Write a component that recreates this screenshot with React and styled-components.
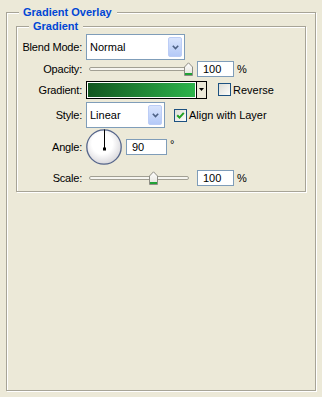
import styled, { createGlobalStyle } from "styled-components";

const GlobalStyle = createGlobalStyle`
  html, body {
    margin: 0;
    padding: 0;
    background: #ece9d8;
  }
  body {
    font-family: "Liberation Sans", Arial, sans-serif;
    font-size: 11px;
    color: #000;
  }
`;

const Page = styled.div`
  box-sizing: border-box;
  height: 100vh;
  display: flex;
  flex-direction: column;
  padding: 6px 6px 6px;
`;

const GroupBox = styled.fieldset`
  min-width: 0;
  margin: ${(p) => (p.$inner ? "1px 9px 0" : "0")};
  flex: ${(p) => (p.$inner ? "none" : "1")};
  padding: ${(p) => (p.$inner ? "1px 0 2px" : "0")};
  border: 1px solid #a7a497;
  box-shadow: inset 1px 1px 0 #fff, 1px 1px 0 #fff;
`;

const Legend = styled.legend`
  margin-left: 12px;
  padding: 0 5px 0 4px;
  background: #ece9d8;
  color: #0046d5;
  font-weight: bold;
  line-height: 13px;
`;

const Row = styled.div`
  display: flex;
  align-items: center;
  height: ${(p) => p.$h}px;
`;

const Label = styled.span`
  flex: none;
  width: 65px;
  margin-right: 4px;
  text-align: right;
  letter-spacing: -0.2px;
`;

const Select = styled.div`
  box-sizing: border-box;
  flex: none;
  width: ${(p) => p.$w}px;
  height: 26px;
  border: 1px solid #7f9db9;
  background: #fff;
  display: flex;
  align-items: center;
  justify-content: space-between;
  padding: 0 2px 0 3px;
`;

const DropButton = styled.span`
  box-sizing: border-box;
  width: 14px;
  height: 20px;
  border: 1px solid #bccdf6;
  border-radius: 2px;
  background: linear-gradient(#d9e4fd, #b4c9f7);
  display: flex;
  align-items: center;
  justify-content: center;
`;

const Chevron = () => (
  <svg width="7" height="5" viewBox="0 0 7 5">
    <path d="M0.8 0.8 L3.5 3.6 L6.2 0.8" fill="none" stroke="#4d6185" strokeWidth="1.6" />
  </svg>
);

const SliderBox = styled.div`
  position: relative;
  flex: none;
  width: 107px;
  height: 14px;
  display: flex;
  align-items: center;
`;

const Track = styled.div`
  box-sizing: border-box;
  margin-left: 3px;
  width: 100px;
  height: 4px;
  border: 1px solid #a19f93;
  border-radius: 2px;
  background: #f6f5f0;
`;

const ThumbSvg = styled.svg`
  position: absolute;
  top: 0;
`;

const Slider = ({ value, min, max }) => {
  const frac = (value - min) / (max - min);
  return (
    <SliderBox>
      <Track />
      <ThumbSvg width="9" height="14" viewBox="0 0 9 14" style={{ left: 3 + frac * 99 - 4 }}>
        <defs>
          <linearGradient id="thumbFill" x1="0" y1="0" x2="0" y2="1">
            <stop offset="0" stopColor="#ffffff" />
            <stop offset="1" stopColor="#e3e2da" />
          </linearGradient>
        </defs>
        <path d="M0.5 13.5 V5 L4.5 0.8 L8.5 5 V13.5 Z" fill="url(#thumbFill)" stroke="#8e8d85" />
        <rect x="1" y="11" width="7" height="2" fill="#21a236" />
      </ThumbSvg>
    </SliderBox>
  );
};

const NumberField = styled.input`
  box-sizing: border-box;
  flex: none;
  width: ${(p) => p.$w}px;
  height: 16px;
  margin: 0 0 0 4px;
  border: 1px solid #7f9db9;
  padding: 0 0 0 5px;
  background: #fff;
  font: 11px "Liberation Sans", Arial, sans-serif;
  color: #000;
  outline: none;
`;

const Unit = styled.span`
  margin-left: 3px;
  align-self: ${(p) => (p.$raised ? "flex-start" : "center")};
  margin-top: ${(p) => (p.$raised ? "10px" : "0")};
`;

const Swatch = styled.div`
  box-sizing: border-box;
  flex: none;
  display: flex;
  width: 121px;
  height: 18px;
  border: 1px solid #000;
`;

const Ramp = styled.div`
  flex: 1;
  border: 1px solid #fff;
  background: linear-gradient(to right, #12561f, #2db44c);
`;

const RampArrow = styled.div`
  width: 9px;
  border-left: 1px solid #000;
  background: #ece9d8;
  display: flex;
  align-items: center;
  justify-content: center;
`;

const Check = styled.span`
  box-sizing: border-box;
  flex: none;
  width: 13px;
  height: 13px;
  margin-left: ${(p) => p.$gap}px;
  margin-right: 2px;
  border: 1px solid #1c5180;
  background: linear-gradient(135deg, #dcdcd6, #fdfdfb);
  display: flex;
  align-items: center;
  justify-content: center;
`;

const Tick = () => (
  <svg width="9" height="9" viewBox="0 0 9 9">
    <path d="M1.2 4.2 L3.5 6.6 L7.8 1.8" fill="none" stroke="#21a121" strokeWidth="2" />
  </svg>
);

const Dial = ({ size }) => (
  <svg width={size} height={size} viewBox="0 0 36 36">
    <defs>
      <radialGradient id="dialFill" cx="0.45" cy="0.4" r="0.6">
        <stop offset="0.5" stopColor="#ffffff" />
        <stop offset="1" stopColor="#d9d8dc" />
      </radialGradient>
    </defs>
    <circle cx="18" cy="18" r="17.2" fill="url(#dialFill)" stroke="#56668b" strokeWidth="1.3" />
    <line x1="18.5" y1="0.5" x2="18.5" y2="19" stroke="#000" strokeWidth="1" />
    <rect x="17" y="18.5" width="3" height="3" fill="#000" />
  </svg>
);

const App = () => {
  return (
    <Page>
      <GlobalStyle />
      <GroupBox>
        <Legend>Gradient Overlay</Legend>
        <GroupBox $inner>
          <Legend>Gradient</Legend>

          <Row $h={26}>
            <Label>Blend Mode:</Label>
            <Select $w={99}>
              Normal
              <DropButton>
                <Chevron />
              </DropButton>
            </Select>
          </Row>

          <Row $h={17}>
            <Label>Opacity:</Label>
            <Slider value={100} min={0} max={100} />
            <NumberField $w={37} defaultValue="100" />
            <Unit>%</Unit>
          </Row>

          <Row $h={25}>
            <Label>Gradient:</Label>
            <Swatch>
              <Ramp />
              <RampArrow>
                <svg width="5" height="3" viewBox="0 0 5 3">
                  <path d="M0 0 H5 L2.5 3 Z" fill="#000" />
                </svg>
              </RampArrow>
            </Swatch>
            <Check $gap={11} />
            <span>Reverse</span>
          </Row>

          <Row $h={26}>
            <Label>Style:</Label>
            <Select $w={79}>
              Linear
              <DropButton>
                <Chevron />
              </DropButton>
            </Select>
            <Check $gap={9}>
              <Tick />
            </Check>
            <span>Align with Layer</span>
          </Row>

          <Row $h={38}>
            <Label>Angle:</Label>
            <Dial size={36} />
            <NumberField $w={41} defaultValue="90" />
            <Unit $raised>°</Unit>
          </Row>

          <Row $h={23}>
            <Label>Scale:</Label>
            <Slider value={100} min={10} max={150} />
            <NumberField $w={37} defaultValue="100" />
            <Unit>%</Unit>
          </Row>
        </GroupBox>
      </GroupBox>
    </Page>
  );
};

export default App;
